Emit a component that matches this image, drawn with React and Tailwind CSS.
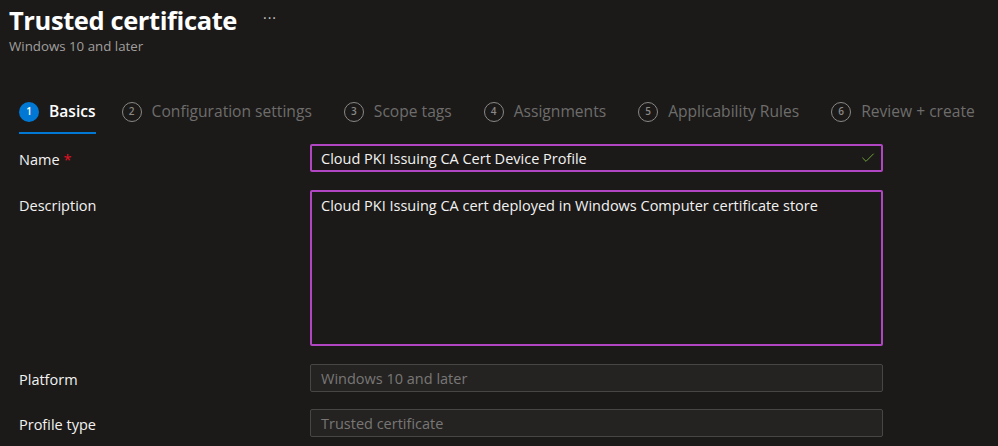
import { Check } from 'lucide-react';

const steps = [
    { n: 1, label: 'Basics', active: true },
    { n: 2, label: 'Configuration settings' },
    { n: 3, label: 'Scope tags' },
    { n: 4, label: 'Assignments' },
    { n: 5, label: 'Applicability Rules' },
    { n: 6, label: 'Review + create' },
];

const Field = ({ label, required, children, className = '' }) => (
    <div className={`flex ${className}`}>
        <div className="w-[310px] shrink-0 pl-[19px] pt-[5px] text-[14.5px] text-[#f3f2f1]">
            {label}
            {required && <span className="ml-1 text-[#e81123]">*</span>}
        </div>
        <div className="w-[573px]">{children}</div>
    </div>
);

export default function App() {
    return (
        <div className="w-[998px] h-[446px] overflow-hidden bg-[#1b1a19] font-['Open_Sans',sans-serif]">
            {/* Header */}
            <div className="pl-[9px] pt-[1px]">
                <div className="flex items-center gap-[26px]">
                    <h1 className="text-[25.5px] font-bold leading-[38px] text-white tracking-[-0.4px]">Trusted certificate</h1>
                    <span className="text-[14px] text-[#c8c6c4] -mt-[6px] tracking-[1px]">···</span>
                </div>
                <div className="text-[13.3px] leading-[14px] text-[#a19f9d]">Windows 10 and later</div>
            </div>

            {/* Steps */}
            <div className="mt-[47px] flex gap-[32px] pl-[19px]">
                {steps.map((s) => (
                    <div
                        key={s.n}
                        className={`shrink-0 flex items-center gap-[10px] pb-[9px] whitespace-nowrap ${s.active ? 'border-b-2 border-[#0078d4] -mr-[6px]' : 'border-b-2 border-transparent'}`}
                    >
                        <span
                            className={`w-[20px] h-[20px] rounded-full flex items-center justify-center text-[10px] font-semibold ${s.active ? 'bg-[#0078d4] text-white' : 'border border-[#8a8886] text-[#8a8886]'}`}
                        >
                            {s.n}
                        </span>
                        <span className={`text-[15.6px] ${s.active ? 'font-semibold text-white' : 'text-[#6e6d6b]'}`}>{s.label}</span>
                    </div>
                ))}
            </div>

            {/* Form */}
            <div className="mt-[10px] flex flex-col">
                <Field label="Name" required>
                    <div className="h-[28px] rounded-[2px] border-2 border-[#b146c2] flex items-center justify-between pl-[9px] pr-[5px] text-[14.5px] text-[#f3f2f1]">
                        <span>Cloud PKI Issuing CA Cert Device Profile</span>
                        <Check className="w-[16px] h-[16px] text-[#6ea13a]" strokeWidth={1.5} />
                    </div>
                </Field>
                <Field label="Description" className="mt-[18px]">
                    <div className="h-[156px] rounded-[2px] border-2 border-[#b146c2] pl-[9px] pt-[3px] text-[14.5px] text-[#f3f2f1]">
                        Cloud PKI Issuing CA cert deployed in Windows Computer certificate store
                    </div>
                </Field>
                <Field label="Platform" className="mt-[18px]">
                    <div className="h-[28px] rounded-[2px] border border-[#484644] bg-[#242322] flex items-center pl-[10px] text-[14.5px] text-[#797775]">
                        Windows 10 and later
                    </div>
                </Field>
                <Field label="Profile type" className="mt-[17px]">
                    <div className="h-[28px] rounded-[2px] border border-[#484644] bg-[#242322] flex items-center pl-[10px] text-[14.5px] text-[#797775]">
                        Trusted certificate
                    </div>
                </Field>
            </div>
        </div>
    );
}
